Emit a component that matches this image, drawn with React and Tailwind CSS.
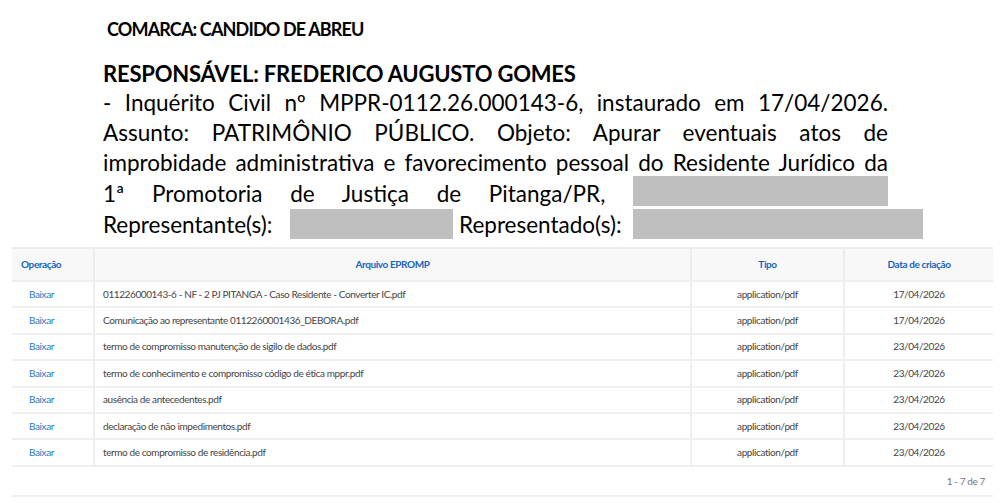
import React from "react";

const files = [
  { name: "011226000143-6 - NF - 2 PJ PITANGA - Caso Residente - Converter IC.pdf", date: "17/04/2026" },
  { name: "Comunicação ao representante 0112260001436_DEBORA.pdf", date: "17/04/2026" },
  { name: "termo de compromisso manutenção de sigilo de dados.pdf", date: "23/04/2026" },
  { name: "termo de conhecimento e compromisso código de ética mppr.pdf", date: "23/04/2026" },
  { name: "ausência de antecedentes.pdf", date: "23/04/2026" },
  { name: "declaração de não impedimentos.pdf", date: "23/04/2026" },
  { name: "termo de compromisso de residência.pdf", date: "23/04/2026" },
];

const doc = { fontFamily: "Lato, 'Liberation Sans', sans-serif" };
const ui = { fontFamily: "Lato, 'Open Sans', sans-serif" };

function Redacted({ w }) {
  return <span className={`inline-block h-[30px] bg-[#bfbfbf] ${w}`} />;
}

export default function App() {
  return (
    <div className="h-[503px] w-[1000px] overflow-hidden bg-white">
      <div className="pl-[103px] text-black" style={doc}>
        <p className="pt-[17px] pl-[4px] text-[18px] font-bold leading-[24px] tracking-[-0.85px]">
          COMARCA: CANDIDO DE ABREU
        </p>
        <p className="mt-[19px] text-[22px] font-bold leading-[28px] tracking-[-0.2px]">
          RESPONSÁVEL: FREDERICO AUGUSTO GOMES
        </p>
        <div className="w-[785px] text-[22.5px] leading-[30px]">
          <p className="whitespace-nowrap [text-align-last:justify]">
            - Inquérito Civil nº MPPR-0112.26.000143-6, instaurado em 17/04/2026.
          </p>
          <p className="whitespace-nowrap [text-align-last:justify]">
            Assunto: PATRIMÔNIO PÚBLICO. Objeto: Apurar eventuais atos de
          </p>
          <p className="whitespace-nowrap [text-align-last:justify]">
            improbidade administrativa e favorecimento pessoal do Residente Jurídico da
          </p>
          <p className="whitespace-nowrap [text-align-last:justify]">
            1ª Promotoria de Justiça de Pitanga/PR, <Redacted w="-mt-[2px] w-[255px] align-[-4px]" />
          </p>
          <p className="whitespace-nowrap">
            Representante(s): <Redacted w="ml-[12px] w-[163px] align-[-6px]" /> Representado(s):{" "}
            <Redacted w="ml-[6px] h-[28px] w-[290px] align-[-6px]" />
          </p>
        </div>
      </div>

      <div className="mx-[12px] mt-[7px] w-[981px] text-[10px] tracking-[-0.4px]" style={ui}>
        <div className="grid grid-cols-[81px_597px_153px_150px] border-t-2 border-[#ececec] bg-[#f8f8f8] font-bold text-[#1565c0]">
          <div className="flex h-[31px] items-center pl-[9px]">Operação</div>
          <div className="flex h-[31px] items-center justify-center border-l-2 border-[#ececec]">Arquivo EPROMP</div>
          <div className="flex h-[31px] items-center justify-center border-l-2 border-[#ececec]">Tipo</div>
          <div className="flex h-[31px] items-center justify-center border-l-2 border-[#ececec]">Data de criação</div>
        </div>
        {files.map((f, i) => (
          <div
            key={i}
            className="grid h-[26.4px] grid-cols-[81px_597px_153px_150px] border-t-2 border-[#efefef] text-[#444]"
          >
            <div className="flex items-center pl-[17px] text-[#2a78c2]">Baixar</div>
            <div className="flex items-center border-l-2 border-[#efefef] pl-[8px]">{f.name}</div>
            <div className="flex items-center justify-center border-l-2 border-[#efefef]">application/pdf</div>
            <div className="flex items-center justify-center border-l-2 border-[#efefef]">{f.date}</div>
          </div>
        ))}
        <div className="flex h-[32px] items-center justify-end border-y-2 border-[#efefef] pt-[2px] pr-[8px] text-[#777]">
          1 - 7 de 7
        </div>
      </div>
    </div>
  );
}
